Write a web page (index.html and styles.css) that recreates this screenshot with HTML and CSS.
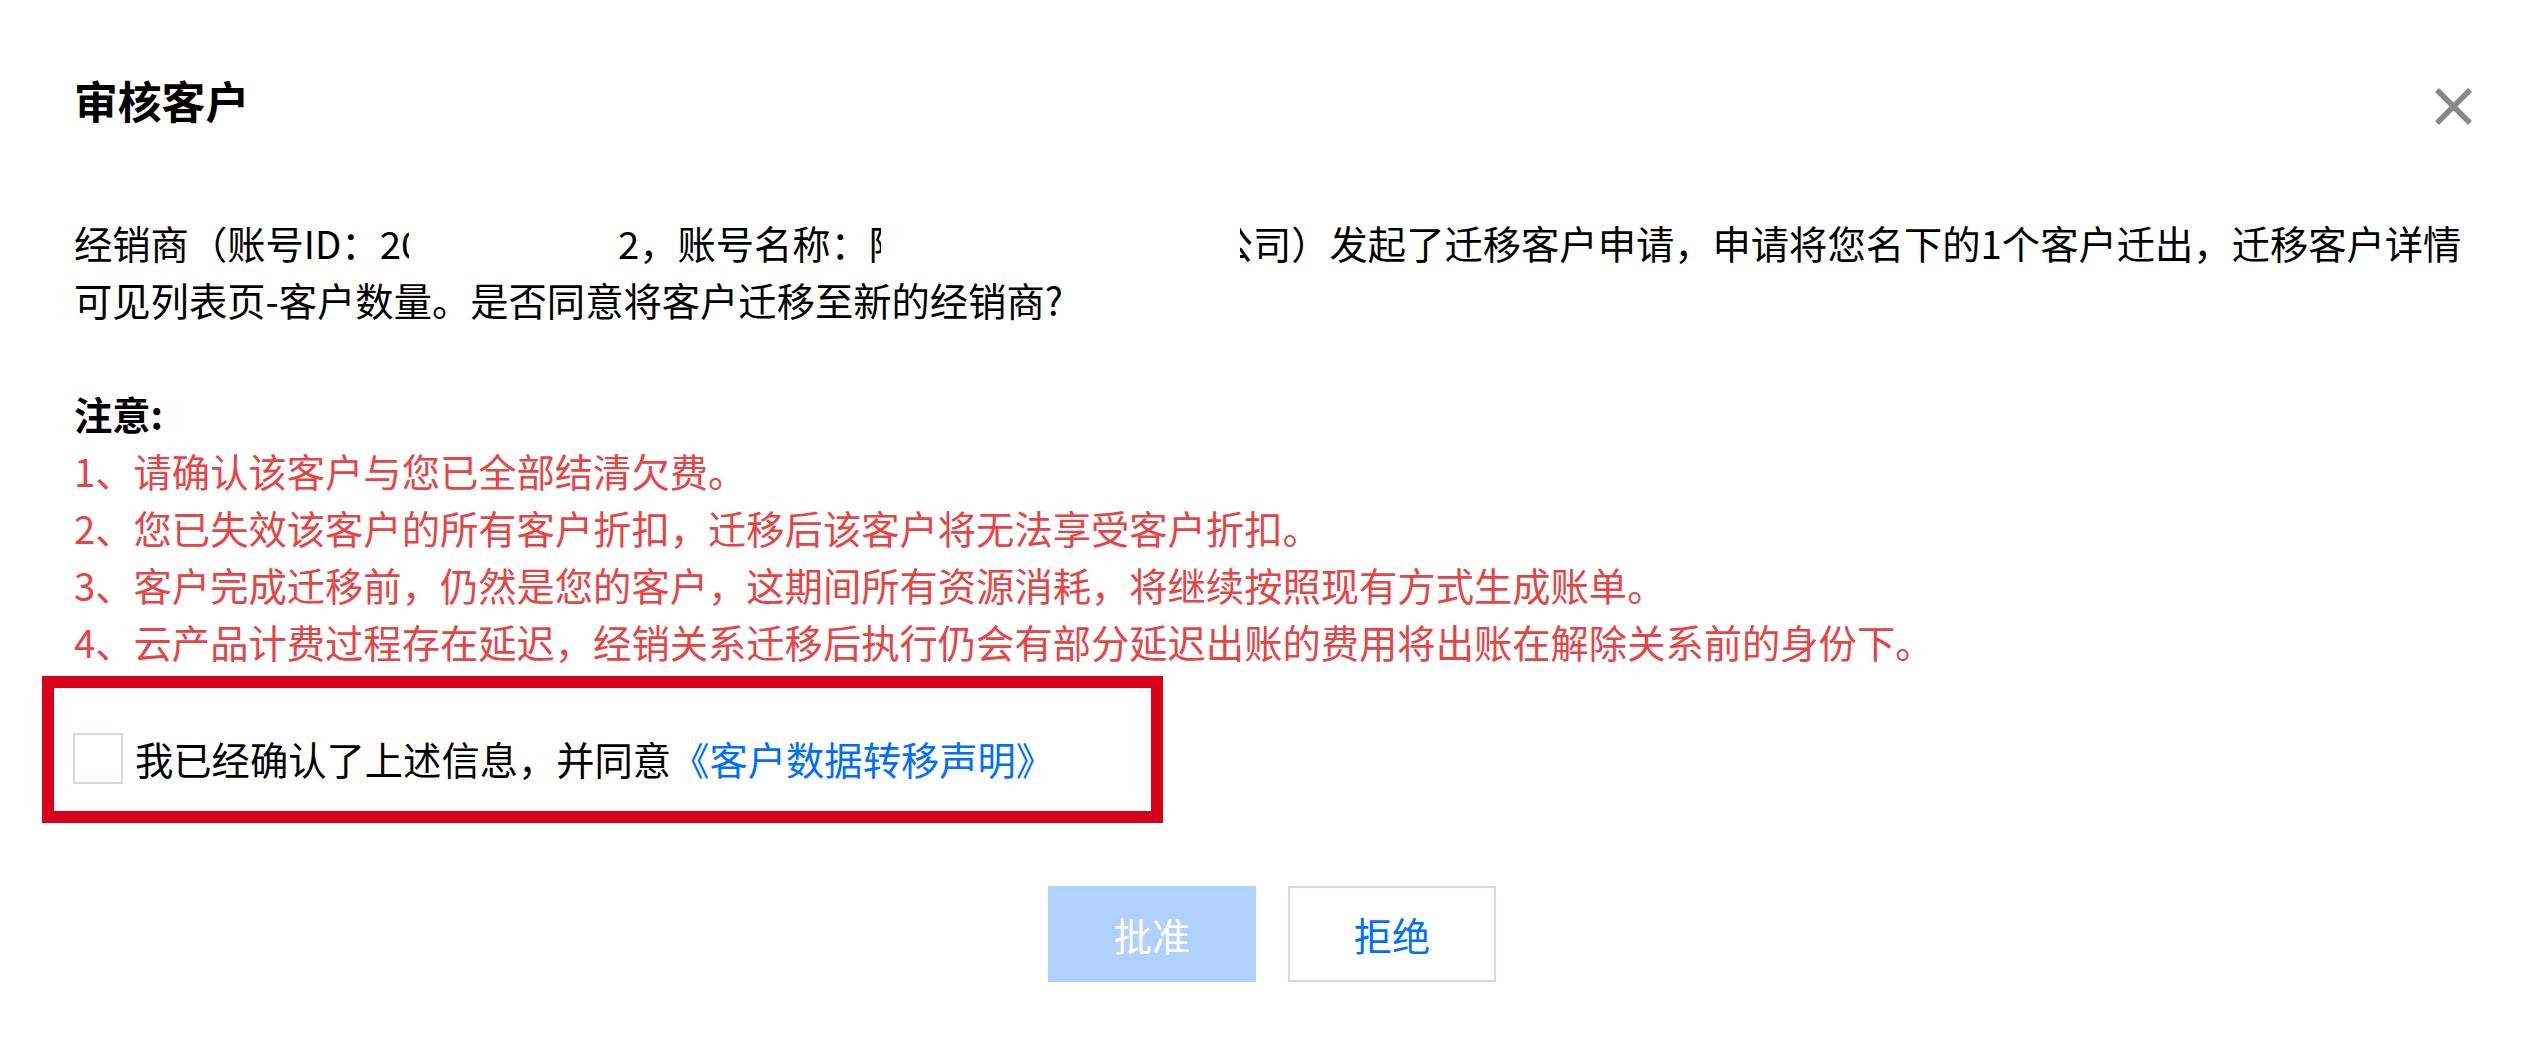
FILE: index.html
```html
<!DOCTYPE html>
<html>
<head>
    <title>审核客户</title>
    <link rel="stylesheet" href="styles.css">
</head>
<body>
    <div class="dialog">
        <div class="dialog-head">
            <h3 class="dialog-title">审核客户</h3>
            <button class="dialog-close" title="关闭">
                <svg width="37" height="37" viewBox="0 0 37 37">
                    <path d="M2 2 L35 35 M35 2 L2 35" stroke="#888" stroke-width="5.5" fill="none"/>
                </svg>
            </button>
        </div>

        <div class="dialog-body">
            <p class="desc">经销商（账号ID：2<span class="cut cut-id">0</span><span class="blank blank-id"></span>2，账号名称：<span class="cut cut-name">陕</span><span class="blank blank-name"></span><span class="cut cut-co"><span>公</span></span>司）发起了迁移客户申请，申请将您名下的1个客户迁出，迁移客户详情可见列表页-客户数量。是否同意将客户迁移至新的经销商?</p>

            <div class="notice">
                <div class="notice-title">注意:</div>
                <ul class="notice-list">
                    <li>1、请确认该客户与您已全部结清欠费。</li>
                    <li>2、您已失效该客户的所有客户折扣，迁移后该客户将无法享受客户折扣。</li>
                    <li>3、客户完成迁移前，仍然是您的客户，这期间所有资源消耗，将继续按照现有方式生成账单。</li>
                    <li>4、云产品计费过程存在延迟，经销关系迁移后执行仍会有部分延迟出账的费用将出账在解除关系前的身份下。</li>
                </ul>
            </div>

            <!-- 标注框 -->
            <div class="mark">
                <label class="agree">
                    <span class="checkbox"></span>
                    <span>我已经确认了上述信息，并同意<a href="#" class="link">《客户数据转移声明》</a></span>
                </label>
            </div>
        </div>

        <div class="dialog-foot">
            <button class="btn btn-primary">批准</button>
            <button class="btn">拒绝</button>
        </div>
    </div>
</body>
</html>
```

FILE: styles.css
```css
body {
    margin: 0;
    background: #fff;
    font-family: "Noto Sans CJK SC", "Noto Sans", sans-serif;
    color: #000;
}

.dialog {
    padding: 68px 74px 0;
}

.dialog-head {
    display: flex;
    justify-content: space-between;
    align-items: flex-start;
}

.dialog-title {
    margin: 0;
    font-size: 43.8px;
    line-height: 64px;
    font-weight: bold;
}

.dialog-close {
    margin: 20px -6px 0 0;
    padding: 0;
    border: none;
    background: none;
    width: 37px;
    height: 37px;
    cursor: pointer;
}

.dialog-close svg {
    display: block;
}

.dialog-body {
    margin-top: 82px;
    font-size: 38.3px;
    line-height: 57px;
}

.desc {
    margin: 0;
}

.cut {
    display: inline-block;
    vertical-align: top;
    overflow: hidden;
    white-space: nowrap;
    height: 57px;
}

.cut-id {
    width: 8px;
}

.cut-name {
    width: 12px;
}

.cut-co {
    width: 13px;
}

.cut-co span {
    margin-left: -25.3px;
}

.blank {
    display: inline-block;
    vertical-align: top;
    height: 57px;
}

.blank-id {
    width: 209px;
}

.blank-name {
    width: 359px;
}

.notice {
    margin-top: 57px;
}

.notice-title {
    font-weight: bold;
}

.notice-list {
    list-style: none;
    margin: 0;
    padding: 0;
    color: #e54545;
}

.mark {
    box-sizing: border-box;
    width: 1121px;
    margin: 6px 0 0 -32px;
    padding: 42px 0 24px 19px;
    border: 12px solid #d9001b;
}

.agree {
    display: flex;
    align-items: center;
    cursor: pointer;
}

.checkbox {
    box-sizing: border-box;
    width: 50px;
    height: 51px;
    margin-right: 12px;
    border: 2px solid #d1d8e3;
    background: #fff;
}

.link {
    color: #006eff;
    text-decoration: none;
}

.dialog-foot {
    display: flex;
    justify-content: center;
    gap: 32px;
    margin-top: 63px;
    padding-left: 4px;
}

.btn {
    box-sizing: border-box;
    width: 208px;
    height: 96px;
    border: 2px solid #d5dbe6;
    background: #fff;
    color: #006eff;
    font-family: inherit;
    font-size: 38.3px;
    cursor: pointer;
}

.btn-primary {
    border-color: #b0d1fd;
    background: #b0d1fd;
    color: #fff;
}
```
